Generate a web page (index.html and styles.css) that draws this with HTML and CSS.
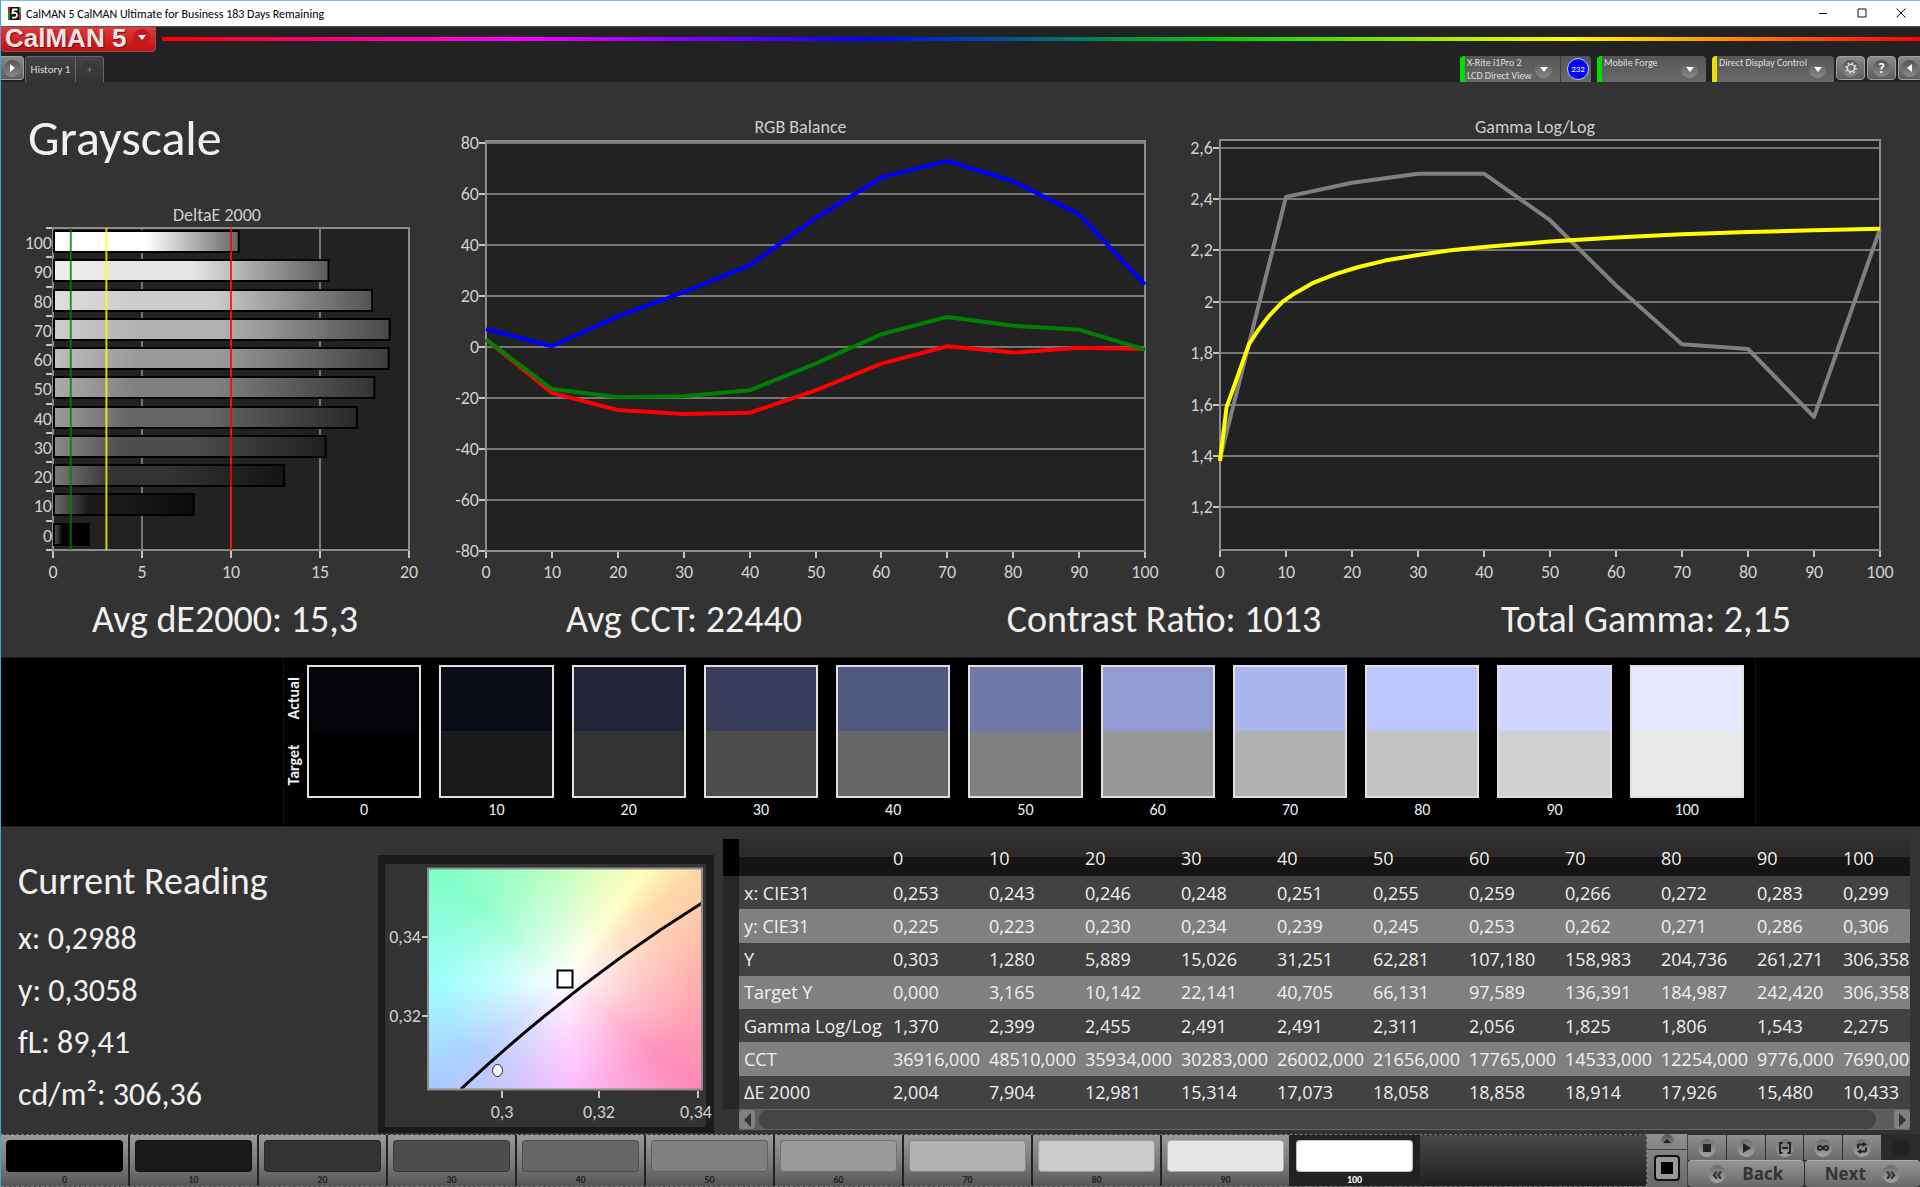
FILE: index.html
```html
<!DOCTYPE html>
<html lang="en">
<head>
  <meta charset="UTF-8" />
  <meta name="viewport" content="width=device-width, initial-scale=1.0" />
  <title>CalMAN 5 CalMAN Ultimate for Business</title>
  <link rel="stylesheet" href="styles.css">
</head>
<body>
  <div class="titlebar">
    <svg class="app-icon" viewBox="0 0 13 13">
      <rect width="13" height="13" fill="#111" />
      <path d="M0 0h2v5H0z" fill="#c22" /><path d="M0 5h2v8H0z" fill="#283" /><path d="M11 0h2v6h-2z" fill="#2a4" /><path d="M11 6h2v7h-2z" fill="#b24" />
      <path d="M9.500 2.500H5L4.500 6q4.500-1 4.500 2.200T4 10.500" fill="none" stroke="#fff" stroke-width="1.800" />
    </svg>
    <span class="window-title">CalMAN 5 CalMAN Ultimate for Business 183 Days Remaining</span>
    <div class="window-buttons">
      <button type="button" aria-label="Minimize"><svg viewBox="0 0 10 10"><path d="M1 5.500h8" /></svg></button>
      <button type="button" aria-label="Maximize"><svg viewBox="0 0 10 10"><path d="M1 1h8v8H1z" /></svg></button>
      <button type="button" aria-label="Close"><svg viewBox="0 0 10 10"><path d="M.5.5l9 9M9.500.5l-9 9" /></svg></button>
    </div>
  </div>

  <header>
    <div class="brand-row">
      <button type="button" class="logo"><span>CalMAN 5</span><i class="round red"><b class="down"></b></i></button>
      <div class="rainbow"></div>
    </div>
    <div class="tab-row">
      <button type="button" class="tool first" aria-label="Expand"><i class="round"><b class="right"></b></i></button>
      <div class="tabs">
        <button type="button" class="tab">History 1</button>
        <button type="button" class="tab add" aria-label="Add tab"><i class="round dark">+</i></button>
      </div>
      <div class="devices">
        <div class="device meter">
          <button type="button"><span>X-Rite i1Pro 2<br>LCD Direct View</span><i class="round"><b class="down"></b></i></button>
          <div class="count"><em>232</em></div>
        </div>
        <div class="device source">
          <button type="button"><span>Mobile Forge</span><i class="round"><b class="down"></b></i></button>
        </div>
        <div class="device display">
          <button type="button"><span>Direct Display Control</span><i class="round"><b class="down"></b></i></button>
        </div>
      </div>
      <div class="tools">
        <button type="button" class="tool" aria-label="Settings"><i class="round"><svg viewBox="0 0 12 12"><circle cx="6" cy="6" r="3.600" fill="none" stroke="#e4e4e4" stroke-width="1.400" /><circle cx="6" cy="6" r="5" fill="none" stroke="#e4e4e4" stroke-width="1.500" stroke-dasharray="1.700 2.227" /></svg></i></button>
        <button type="button" class="tool" aria-label="Help"><i class="round help">?</i></button>
        <button type="button" class="tool last" aria-label="Collapse"><i class="round"><b class="left"></b></i></button>
      </div>
    </div>
  </header>

  <main>
    <section class="charts">
      <div>
        <h1>Grayscale</h1>
        <svg id="deltaChart" class="chart" viewBox="1 190 444 400"></svg>
      </div>
      <svg id="rgbChart" class="chart" viewBox="445 82 735 508"></svg>
      <svg id="gammaChart" class="chart" viewBox="1180 82 740 508"></svg>
    </section>

    <section class="stats">
      <p>Avg dE2000: 15,3</p>
      <p>Avg CCT: 22440</p>
      <p>Contrast Ratio: 1013</p>
      <p>Total Gamma: 2,15</p>
    </section>

    <section class="swatches">
      <div class="swatch-panel">
        <div class="swatch-labels"><span>Actual</span><span>Target</span></div>
        <div class="swatch-list" id="swatchList"></div>
      </div>
    </section>

    <section class="details">
      <div class="reading">
        <h2>Current Reading</h2>
        <p>x: 0,2988</p>
        <p>y: 0,3058</p>
        <p>fL: 89,41</p>
        <p>cd/m²: 306,36</p>
      </div>

      <svg class="chart cie" viewBox="378 854 336 278">
        <rect x="378" y="854" width="336" height="278" fill="#1a1a1a" />
        <rect x="385" y="863" width="321" height="263" fill="#333" />
        <foreignObject x="428" y="867" width="275" height="222"><div class="cie-colors"></div></foreignObject>
        <path class="locus" d="M461 1088C535 1019 620 953 702 902" />
        <rect class="axis" x="428" y="867.500" width="274" height="221" />
        <path class="tick" d="M422 936h6M422 1015h6M502 1090v7M599 1090v7M698 1090v7" />
        <rect x="557.500" y="969.500" width="15" height="17" fill="#fff" stroke="#000" stroke-width="2" />
        <ellipse cx="497.500" cy="1069.500" rx="5" ry="6" fill="#fff" stroke="#222" />
        <g class="end"><text x="421" y="942">0,34</text><text x="421" y="1021">0,32</text></g>
        <g class="middle"><text x="502" y="1117">0,3</text><text x="599" y="1117">0,32</text><text x="696" y="1117">0,34</text></g>
      </svg>

      <div class="data">
        <table>
          <colgroup>
            <col class="c-mark"><col class="c-name"><col span="9" class="c-val"><col class="c-short"><col class="c-last">
          </colgroup>
          <thead><tr id="dataHead"></tr></thead>
          <tbody id="dataBody"></tbody>
        </table>
        <div class="scroll">
          <button type="button" aria-label="Scroll left"><b class="left"></b></button>
          <div class="thumb"></div>
          <button type="button" aria-label="Scroll right"><b class="right"></b></button>
        </div>
      </div>
    </section>
  </main>

  <footer>
    <div class="levels" id="levels"></div>
    <div class="window-type">
      <button type="button" class="up" aria-label="More patterns"><i class="round"><b class="upward"></b></i></button>
      <button type="button" class="pattern" aria-label="Pattern window"><span></span></button>
    </div>
    <div class="controls">
      <div class="transport">
        <button type="button" aria-label="Stop"><i class="round"><svg viewBox="0 0 12 12"><path d="M2 2h8v8H2z" /></svg></i></button>
        <button type="button" aria-label="Read"><i class="round"><svg viewBox="0 0 12 12"><path d="M3 1l8 5-8 5z" /></svg></i></button>
        <button type="button" aria-label="Read series"><i class="round"><svg viewBox="0 0 12 12"><path class="line" d="M3.500 1H1v10h2.500M8.500 1H11v10H8.500M3 6h6" /></svg></i></button>
        <button type="button" aria-label="Read continuous"><i class="round"><svg viewBox="0 0 12 12"><path class="line" d="M6 6C4.500 3.500 1 3 1 6s3.500 2.500 5 0 5-3 5 0-3.500 2.500-5 0z" /></svg></i></button>
        <button type="button" aria-label="Repeat"><i class="round"><svg viewBox="0 0 12 12"><path class="line" d="M2 6.500V3.500Q2 2.500 3 2.500h4M10 5.500v3q0 1-1 1H5" /><path d="M7 0l4 2.500L7 5zM5 7L1 9.500 5 12z" /></svg></i></button>
        <span class="off"><i class="round dark"></i></span>
      </div>
      <div class="nav">
        <button type="button"><i class="round">«</i>Back</button>
        <button type="button">Next<i class="round">»</i></button>
      </div>
    </div>
  </footer>

  <script src="script.js"></script>
</body>
</html>
```
FILE: styles.css
```css
* {
  box-sizing: border-box;
}
body {
  margin: 0;
  min-height: 100vh;
  display: flex;
  flex-direction: column;
  border-left: 1px solid #4aa3dc;
  background: #333;
  color: #f0f0f0;
  font-family: Calibri, Carlito, "Open Sans", sans-serif;
}
h1, h2, p {
  margin: 0;
  font-weight: normal;
}
button {
  border: 0;
  padding: 0;
  margin: 0;
  background: none;
  color: inherit;
  font: inherit;
}

/* window title */
.titlebar {
  display: flex;
  align-items: center;
  height: 26px;
  padding-left: 7px;
  border-top: 1px solid #78c0ec;
  background: #fff;
  color: #000;
  font-size: 12px;
}
.app-icon {
  width: 13px;
  height: 13px;
  margin-right: 5px;
}
.window-title {
  flex: 1;
}
.window-buttons {
  display: flex;
}
.window-buttons button {
  width: 39px;
  height: 25px;
}
.window-buttons svg {
  width: 10px;
  height: 10px;
  fill: none;
  stroke: #111;
}

/* header */
header {
  height: 56px;
  background: #222;
  border-top: 1px solid #555;
}
.brand-row {
  display: flex;
  height: 29px;
}
.logo {
  display: flex;
  align-items: center;
  justify-content: space-between;
  width: 155px;
  height: 25px;
  padding: 0 5px 3px 4px;
  border: solid #8a5555;
  border-width: 0 1px 1px 0;
  border-radius: 0 0 4px 4px;
  background: linear-gradient(#e23a3a, #c40f14);
  color: #e6e6e6;
  font: bold 26px "Liberation Sans", sans-serif;
  line-height: 22px;
  text-shadow: 1px 1px 1px #611;
  white-space: nowrap;
}
.rainbow {
  flex: 1;
  height: 4px;
  margin: 10px 0 0 6px;
  background: linear-gradient(90deg, red, magenta 20%, blue 40%, #0c0 60%, yellow 80%, red);
}
.round {
  display: flex;
  align-items: center;
  justify-content: center;
  width: 17px;
  height: 17px;
  border-radius: 50%;
  background: linear-gradient(#555, #8a8a8a);
  font-style: normal;
}
.round.red {
  background: #c01c20;
}
.round.dark {
  background: #3a3a3a;
}
.round svg {
  width: 12px;
  height: 12px;
}
.down, .right, .left, .upward {
  border: 4px solid transparent;
}
.down {
  border-top: 5px solid #fff;
  border-bottom: 0;
}
.upward {
  border-bottom-color: #222;
  border-top: 0;
}
.right {
  border-left: 5px solid #fff;
  border-right: 0;
}
.left {
  border-right: 5px solid #fff;
  border-left: 0;
}
.tab-row {
  display: flex;
  height: 26px;
  color: #ddd;
  font-size: 11px;
}
.tool {
  display: flex;
  align-items: center;
  justify-content: center;
  width: 29px;
  height: 24px;
  border: 1px solid #a0a0a0;
  border-radius: 4px;
  background: linear-gradient(#8a8a8a, #5e5e5e);
}
.tool.first {
  width: 23px;
  border-left: 0;
  border-radius: 0 4px 4px 0;
}
.tool.last {
  width: 22px;
  border-right: 0;
  border-radius: 4px 0 0 4px;
}
.help {
  color: #fff;
  font-size: 14px;
  font-weight: bold;
}
.tabs {
  display: flex;
  margin-left: 1px;
}
.tab {
  width: 51px;
  border: 1px solid #666;
  border-bottom: 0;
  border-radius: 4px 0 0 0;
  background: linear-gradient(#444, #333);
  white-space: nowrap;
}
.tab.add {
  display: flex;
  align-items: center;
  justify-content: center;
  width: 28px;
  border-left: 0;
  border-radius: 0 4px 0 0;
  color: #888;
}
.devices {
  display: flex;
  gap: 6px;
  margin-left: auto;
}
.device {
  display: flex;
  border-left: 5px solid #00e000;
  border-radius: 4px 4px 0 0;
  background: linear-gradient(#555, #6a6a6a);
  font-size: 10px;
}
.device button {
  flex: 1;
  display: flex;
  align-items: center;
  justify-content: space-between;
  padding: 0 8px 0 2px;
  text-align: left;
  line-height: 13px;
  white-space: nowrap;
}
.device span {
  align-self: flex-start;
}
.meter {
  width: 131px;
}
.source {
  width: 109px;
}
.display {
  width: 122px;
  border-left-color: #e8e000;
}
.count {
  display: flex;
  align-items: center;
  padding: 0 2px 0 6px;
  border-left: 1px solid #3c3c3c;
}
.count em {
  width: 22px;
  border: 1px solid #ccc;
  border-radius: 50%;
  background: #00f;
  color: #fff;
  font-size: 9px;
  font-style: normal;
  line-height: 20px;
  text-align: center;
}
.tools {
  display: flex;
  gap: 2px;
  margin-left: 2px;
}

/* charts */
.charts {
  display: grid;
  grid-template-columns: 444fr 735fr 740fr;
}
h1 {
  height: 108px;
  padding-left: 27px;
  font-size: 50px;
  line-height: 112px;
}
.chart {
  display: block;
  width: 100%;
  font-size: 18px;
}
.chart text {
  fill: #d0d0d0;
}
.plot {
  fill: #222;
}
.grid {
  fill: none;
  stroke: #777;
  stroke-width: 2;
}
.axis {
  fill: none;
  stroke: #8c8c8c;
  stroke-width: 2;
}
.tick {
  fill: none;
  stroke: #c4c4c4;
  stroke-width: 2;
}
.series {
  fill: none;
  stroke-width: 4;
  stroke-linejoin: round;
}
.middle {
  text-anchor: middle;
}
.end {
  text-anchor: end;
}
.stats {
  display: grid;
  grid-template-columns: 448fr 470fr 490fr 474fr 37fr;
  height: 67px;
  font-size: 38px;
  line-height: 58px;
  text-align: center;
  white-space: nowrap;
}

/* color swatches */
.swatches {
  display: grid;
  grid-template-columns: 282fr 1473fr 164fr;
  border: solid #222;
  border-width: 1px 0;
  background: #000;
}
.swatch-panel {
  grid-column: 2;
  display: flex;
  padding: 7px 11px 6px 0;
  border: solid #111;
  border-width: 0 1px;
}
.swatch-labels {
  display: flex;
  flex-direction: column;
  width: 23px;
  height: 133px;
  font-size: 16px;
  font-weight: bold;
}
.swatch-labels span {
  flex: 1;
  writing-mode: vertical-rl;
  transform: rotate(180deg);
  line-height: 20px;
  text-align: center;
}
.swatch-list {
  flex: 1;
  display: flex;
  gap: 18px;
}
.swatch {
  flex: 1;
  font-size: 16px;
  line-height: 20px;
  text-align: center;
}
.swatch div {
  height: 133px;
  margin-bottom: 2px;
  border: 2px solid #e0e0e0;
}

/* readings, cie and table */
main {
  flex: 1;
}
.details {
  display: grid;
  grid-template-columns: 368fr 336fr 1187fr;
  gap: 9px;
  padding-right: 10px;
}
.reading {
  padding: 28px 0 0 17px;
  font-size: 32px;
  line-height: 52px;
}
.reading h2 {
  margin-bottom: 6px;
  font-size: 38px;
}
.cie {
  margin-top: 28px;
  overflow: visible;
}
.cie-colors {
  height: 222px;
  background:
    radial-gradient(farthest-corner, #fff, rgba(255, 255, 255, 0.4) 38%, rgba(255, 255, 255, 0.1) 65%, rgba(255, 255, 255, 0)),
    conic-gradient(#c0ffbc, #ffffb8 36deg, #ffd6a4 51deg, #ffa8a4 90deg, #ff86b6 129deg, #ffb8ff 176deg, #a8c8ff 231deg, #94ffff 268deg, #7cffc6 309deg, #c0ffbc);
}
.locus {
  fill: none;
  stroke: #000;
  stroke-width: 3;
}
.data {
  padding-top: 12px;
  font-family: "Open Sans", sans-serif;
}
table {
  width: 100%;
  height: 270px;
  table-layout: fixed;
  border-collapse: collapse;
  font-size: 18px;
  line-height: 24px;
}
.c-mark {
  width: 16px;
}
.c-name {
  width: 149px;
}
.c-val {
  width: 96px;
}
.c-short {
  width: 86px;
}
.c-last {
  width: 72px;
}
th, td {
  height: 33px;
  padding: 0 0 0 5px;
  overflow: hidden;
  font-weight: normal;
  text-align: left;
  white-space: nowrap;
}
thead tr {
  background: linear-gradient(#2f2f2f, #2a2a2a 50%, #141414 50%, #141414);
}
thead th, thead td {
  height: 37px;
}
.mark {
  background: #262626;
}
thead .mark {
  background: #000;
}
tbody tr {
  background: #424242;
}
tbody tr:nth-child(even) {
  background: #808080;
}
.scroll {
  display: flex;
  height: 21px;
  margin-left: 16px;
  border: solid #666;
  border-width: 1px 0;
  background: #5c5c5c;
}
.scroll button {
  display: flex;
  align-items: center;
  justify-content: center;
  width: 16px;
  border-radius: 4px;
  background: #808080;
}
.scroll .left {
  border-width: 7px 7px 7px 0;
  border-right-color: #333;
}
.scroll .right {
  border-width: 7px 0 7px 7px;
  border-left-color: #333;
}
.thumb {
  flex: 1;
  margin: 0 18px 0 4px;
  border-radius: 9px;
  background: #444;
}

/* bottom bar */
footer {
  display: flex;
  height: 53px;
  background: #2c2c2c;
}
.levels {
  flex: 1;
  display: flex;
  border: 1px dashed #777;
  border-left: 0;
  background: linear-gradient(#484848, #202020);
}
.level {
  flex: 0 1 129px;
  padding: 4px 5px 0;
  border-right: 2px solid #222;
  background: linear-gradient(#999, #777 60%, #555);
  color: #222;
  font-size: 10px;
  font-weight: bold;
  line-height: 12px;
  text-align: center;
}
.level span {
  display: block;
  height: 32px;
  margin-bottom: 2px;
  border: 1px solid rgba(0, 0, 0, 0.25);
  border-radius: 4px;
}
.level.active {
  background: #222;
  color: #fff;
}
.window-type {
  display: flex;
  flex-direction: column;
  width: 41px;
  background: linear-gradient(#909090, #686868);
  border-right: 1px solid #444;
}
.up {
  display: flex;
  justify-content: center;
  height: 16px;
  border-bottom: 1px solid #444;
}
.up .round {
  width: 13px;
  height: 13px;
}
.pattern {
  align-self: center;
  width: 26px;
  height: 26px;
  margin-top: 5px;
  padding: 5px;
  border: 2px solid #111;
  border-radius: 4px;
  background: #999;
}
.pattern span {
  display: block;
  height: 12px;
  background: #000;
}
.controls {
  width: 232px;
  padding-top: 1px;
}
.transport, .nav {
  display: flex;
  gap: 1px;
  height: 25px;
}
.transport button, .off {
  flex: 1;
  display: flex;
  align-items: center;
  justify-content: center;
  background: linear-gradient(#909090, #6a6a6a);
}
.transport .off {
  background: #2a2a2a;
}
.controls .round {
  width: 18px;
  height: 18px;
  background: linear-gradient(#6c6c6c, #a4a4a4);
}
.controls .round.dark {
  background: #222;
}
.transport svg {
  fill: #222;
}
.transport .line {
  fill: none;
  stroke: #222;
  stroke-width: 2;
}
.nav {
  height: 27px;
}
.nav button {
  flex: 1;
  display: flex;
  align-items: center;
  justify-content: center;
  gap: 16px;
  border-top: 1px solid #aaa;
  border-radius: 4px;
  background: linear-gradient(#959595, #686868);
  color: #333;
  font: bold 17px "Open Sans", sans-serif;
  line-height: 24px;
}
.nav .round {
  line-height: 16px;
}
```
FILE: script.js
```js
const levels = [0, 10, 20, 30, 40, 50, 60, 70, 80, 90, 100];
const actual = ["#030308", "#0a0d17", "#22243a", "#3a3d5a", "#51587f", "#7179aa", "#929ad2", "#adb7ef", "#bbc6ff", "#cfd5ff", "#e6e8ff"];
const target = ["#000", "#1a1a1a", "#333", "#4c4c4c", "#666", "#808080", "#989898", "#b0b0b0", "#c3c3c3", "#d1d1d1", "#e9e9e9"];
const grays = [0, 26, 51, 77, 102, 128, 153, 178, 204, 230, 255];

const rows = {
  "x: CIE31": "0,253 0,243 0,246 0,248 0,251 0,255 0,259 0,266 0,272 0,283 0,299",
  "y: CIE31": "0,225 0,223 0,230 0,234 0,239 0,245 0,253 0,262 0,271 0,286 0,306",
  "Y": "0,303 1,280 5,889 15,026 31,251 62,281 107,180 158,983 204,736 261,271 306,358",
  "Target Y": "0,000 3,165 10,142 22,141 40,705 66,131 97,589 136,391 184,987 242,420 306,358",
  "Gamma Log/Log": "1,370 2,399 2,455 2,491 2,491 2,311 2,056 1,825 1,806 1,543 2,275",
  "CCT": "36916,000 48510,000 35934,000 30283,000 26002,000 21656,000 17765,000 14533,000 12254,000 9776,000 7690,000",
  "ΔE 2000": "2,004 7,904 12,981 15,314 17,073 18,058 18,858 18,914 17,926 15,480 10,433"
};

const deltaE = rows["ΔE 2000"].split(" ").map(v => parseFloat(v.replace(",", ".")));

function text(x, y, value, anchor) {
  return `<text class="${anchor}" x="${x}" y="${y}">${value}</text>`;
}

function polyline(points, color, px, py) {
  return `<polyline class="series" stroke="${color}" points="${points.map(([x, y]) => px(x) + "," + py(y)).join(" ")}" />`;
}

// line chart: plot box, y axis labels and the series in it
function lineChart(id, title, box, yValues, py, series) {
  const px = v => box.x + v * box.w / 100;
  const bottom = box.y + box.h;
  let out = text(box.x + box.w / 2 - 15, 133, title, "middle");
  out += `<rect class="plot" x="${box.x}" y="${box.y}" width="${box.w}" height="${box.h}" />`;
  yValues.forEach(v => {
    const y = Math.round(py(v));
    out += `<path class="grid" d="M${box.x} ${y}h${box.w}" /><path class="tick" d="M${box.x - 7} ${y}h6" />`;
    out += text(box.x - 7, y + 6, String(v).replace(".", ","), "end");
  });
  levels.forEach(v => {
    const x = Math.round(px(v));
    out += `<path class="tick" d="M${x} ${bottom + 1}v6" />` + text(x, 578, v, "middle");
  });
  out += `<rect class="axis" x="${box.x}" y="${box.y}" width="${box.w}" height="${box.h}" />`;
  series.forEach(s => { out += polyline(s.points, s.color, px, py); });
  document.getElementById(id).innerHTML = out;
}

const byLevel = values => values.map((v, i) => [levels[i], v]);

lineChart("rgbChart", "RGB Balance", { x: 486, y: 141, w: 659, h: 410 },
  [80, 60, 40, 20, 0, -20, -40, -60, -80], v => 347 - v * 2.55, [
    { color: "blue", points: byLevel([7, 0.3, 12, 21.5, 32, 50.5, 66.5, 73, 65, 52, 24.5]) },
    { color: "red", points: byLevel([3, -18, -24.7, -26.3, -25.8, -17, -6.5, 0.3, -2.2, -0.3, -0.8]) },
    { color: "green", points: byLevel([3, -16.5, -19.7, -19.3, -17, -6.5, 5, 11.8, 8.3, 6.8, -1]) }
  ]);

lineChart("gammaChart", "Gamma Log/Log", { x: 1220, y: 140, w: 660, h: 410 },
  [2.6, 2.4, 2.2, 2, 1.8, 1.6, 1.4, 1.2], v => 147.5 + (2.6 - v) * 257, [
    { color: "gray", points: byLevel([1.39, 2.408, 2.463, 2.498, 2.498, 2.317, 2.063, 1.834, 1.816, 1.552, 2.283]) },
    { color: "yellow", points: [[0, 1.38], [1, 1.59], [4.4, 1.835], [5.8, 1.89], [7.4, 1.944], [9.5, 2], [11.3, 2.032], [14, 2.072], [17.6, 2.108], [21, 2.135], [25, 2.16], [30, 2.182], [35, 2.2], [40, 2.213], [50, 2.234], [60, 2.25], [70, 2.262], [80, 2.271], [90, 2.278], [100, 2.284]] }
  ]);

function renderDelta() {
  const left = 53, top = 228, width = 356, height = 322;
  const px = v => left + v * width / 20;
  const step = height / 11;
  let out = text(217, 221, "DeltaE 2000", "middle");
  out += `<rect class="plot" x="${left}" y="${top}" width="${width}" height="${height}" />`;
  [0, 5, 10, 15, 20].forEach(v => {
    const x = Math.round(px(v));
    out += `<path class="grid" d="M${x} ${top}v${height}" /><path class="tick" d="M${x} 551v7" />` + text(x, 578, v, "middle");
  });
  out += `<rect class="axis" x="${left}" y="${top}" width="${width}" height="${height}" />`;
  for (let i = 0; i <= 11; i++) {
    out += `<path class="tick" d="M46 ${Math.round(top + i * step)}h6" />`;
  }
  levels.forEach((level, i) => {
    const y = Math.round(top + (10 - i) * step) + 3;
    const g = grays[i];
    const start = Math.round(g + (255 - g) * 0.35);
    const end = Math.round(g * 0.4);
    out += `<linearGradient id="bar${i}">
      <stop offset="0" stop-color="rgb(${start},${start},${start})" />
      <stop offset="0.25" stop-color="rgb(${g},${g},${g})" />
      <stop offset="0.5" stop-color="rgb(${g},${g},${g})" />
      <stop offset="1" stop-color="rgb(${end},${end},${end})" />
    </linearGradient>`;
    out += `<rect x="54" y="${y}" width="${px(deltaE[i]) - 54}" height="21" fill="url(#bar${i})" stroke="#000" stroke-width="2" />`;
    out += text(52, y + 18, level, "end");
  });
  [[1, "green"], [3, "yellow"], [10, "red"]].forEach(([v, color]) => {
    out += `<path d="M${px(v)} ${top}v${height}" stroke="${color}" stroke-width="2" stroke-opacity="0.8" />`;
  });
  document.getElementById("deltaChart").innerHTML = out;
}

function renderSwatches() {
  document.getElementById("swatchList").innerHTML = levels.map((level, i) =>
    `<div class="swatch"><div style="background: linear-gradient(${actual[i]} 50%, ${target[i]} 50%)"></div>${level}</div>`
  ).join("");
}

function renderTable() {
  document.getElementById("dataHead").innerHTML = `<td class="mark"></td><td></td>` +
    levels.map(l => `<th scope="col">${l}</th>`).join("");
  document.getElementById("dataBody").innerHTML = Object.keys(rows).map(name =>
    `<tr><td class="mark"></td><th scope="row">${name}</th>${rows[name].split(" ").map(v => `<td>${v}</td>`).join("")}</tr>`
  ).join("");
}

function renderLevels() {
  document.getElementById("levels").innerHTML = levels.map((level, i) =>
    `<button type="button" class="level${level === 100 ? " active" : ""}"><span style="background: rgb(${grays[i]},${grays[i]},${grays[i]})"></span>${level}</button>`
  ).join("");
}

renderDelta();
renderSwatches();
renderTable();
renderLevels();
```
